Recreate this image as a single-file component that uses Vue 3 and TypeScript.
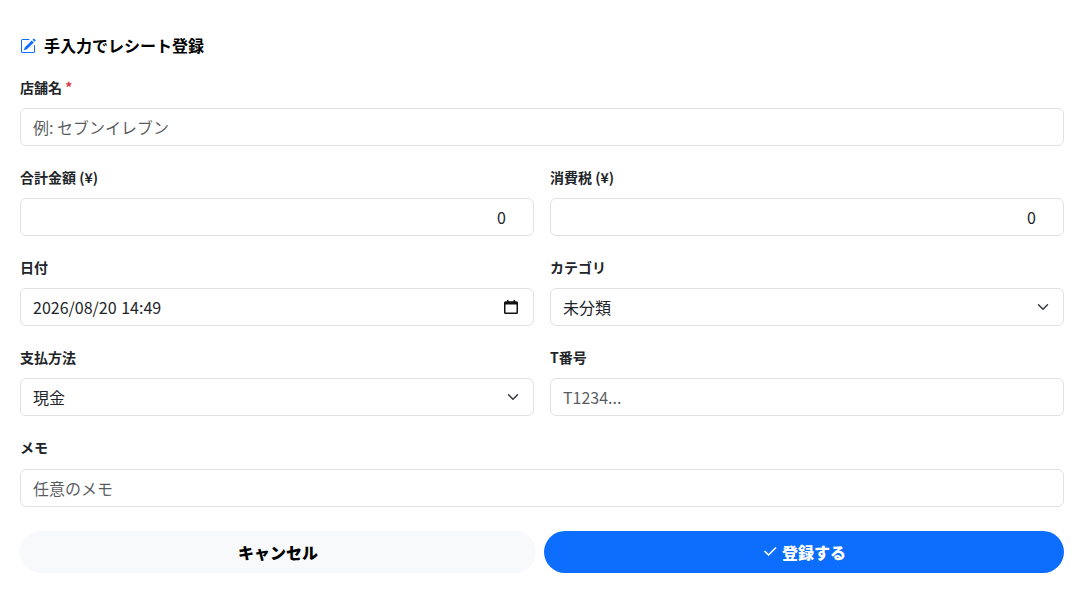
<script setup lang="ts">
const currency = 0;
</script>

<template>
  <form class="form" @submit.prevent>
    <h2 class="title">
      <svg class="edit" viewBox="0 0 16 16" fill="#0d6efd" aria-hidden="true">
        <path d="M15.502 1.94a.5.5 0 0 1 0 .706L14.459 3.69l-2-2L13.502.646a.5.5 0 0 1 .707 0l1.293 1.293zm-1.75 2.456-2-2L4.939 9.21a.5.5 0 0 0-.121.196l-.805 2.414a.25.25 0 0 0 .316.316l2.414-.805a.5.5 0 0 0 .196-.12l6.813-6.814z"/>
        <path fill-rule="evenodd" d="M1 13.5A1.5 1.5 0 0 0 2.5 15h11a1.5 1.5 0 0 0 1.5-1.5v-6a.5.5 0 0 0-1 0v6a.5.5 0 0 1-.5.5h-11a.5.5 0 0 1-.5-.5v-11a.5.5 0 0 1 .5-.5H9a.5.5 0 0 0 0-1H2.5A1.5 1.5 0 0 0 1 2.5z"/>
      </svg>
      <span>手入力でレシート登録</span>
    </h2>

    <div class="field">
      <label>店舗名 <span class="req">*</span></label>
      <input class="ctl" type="text" placeholder="例: セブンイレブン" />
    </div>

    <div class="row">
      <div class="field">
        <label>合計金額 (¥)</label>
        <input class="ctl num" type="text" :value="currency" />
      </div>
      <div class="field">
        <label>消費税 (¥)</label>
        <input class="ctl num" type="text" :value="currency" />
      </div>
    </div>

    <div class="row">
      <div class="field">
        <label>日付</label>
        <div class="ctl fake">
          <span class="date">2026/08/20 14:49</span>
          <svg class="cal" viewBox="0 0 14 14" aria-hidden="true">
            <path fill="#111" fill-rule="evenodd" d="M3 0h1.5v1.2h5V0H11v1.2h1.5A1.5 1.5 0 0 1 14 2.7v9.8a1.5 1.5 0 0 1-1.5 1.5h-11A1.5 1.5 0 0 1 0 12.5V2.7a1.5 1.5 0 0 1 1.5-1.5H3zM1.5 4.4v8.1h11V4.4z"/>
          </svg>
        </div>
      </div>
      <div class="field">
        <label>カテゴリ</label>
        <div class="ctl fake">
          <span>未分類</span>
          <svg class="chev" viewBox="0 0 16 16" aria-hidden="true">
            <path fill="none" stroke="#343a40" stroke-linecap="round" stroke-linejoin="round" stroke-width="2" d="m2 5 6 6 6-6"/>
          </svg>
        </div>
      </div>
    </div>

    <div class="row">
      <div class="field">
        <label>支払方法</label>
        <div class="ctl fake">
          <span>現金</span>
          <svg class="chev" viewBox="0 0 16 16" aria-hidden="true">
            <path fill="none" stroke="#343a40" stroke-linecap="round" stroke-linejoin="round" stroke-width="2" d="m2 5 6 6 6-6"/>
          </svg>
        </div>
      </div>
      <div class="field">
        <label>T番号</label>
        <input class="ctl" type="text" placeholder="T1234..." />
      </div>
    </div>

    <div class="field memo">
      <label>メモ</label>
      <input class="ctl" type="text" placeholder="任意のメモ" />
    </div>

    <div class="actions">
      <button type="button" class="btn cancel">キャンセル</button>
      <button type="submit" class="btn primary">
        <svg class="check" viewBox="0 0 16 16" fill="#fff" aria-hidden="true">
          <path d="M13.854 3.646a.5.5 0 0 1 0 .708l-7 7a.5.5 0 0 1-.708 0l-3.5-3.5a.5.5 0 1 1 .708-.708L6.5 10.293l6.646-6.647a.5.5 0 0 1 .708 0z" stroke="#fff" stroke-width=".9"/>
        </svg>
        <span>登録する</span>
      </button>
    </div>
  </form>
</template>

<style>
html, body { margin: 0; background: #fff; }
</style>

<style scoped>
.form {
  box-sizing: border-box;
  width: 1084px;
  height: 592px;
  padding: 35px 20px 0;
  font-family: "Noto Sans CJK JP", "Noto Sans", sans-serif;
  color: #212529;
  background: #fff;
}
.title {
  display: flex;
  align-items: center;
  gap: 8px;
  margin: 0 0 23px;
  height: 20px;
  font-size: 16px;
  line-height: 20px;
  font-weight: 700;
  color: #000;
}
.edit { width: 16px; height: 16px; margin-top: 1px; }
.field { min-width: 0; margin-bottom: 22px; }
.field label {
  display: block;
  height: 20px;
  margin-bottom: 10px;
  font-size: 14px;
  line-height: 18px;
  font-weight: 700;
}
.req { color: #dc3545; }
.row {
  display: grid;
  grid-template-columns: 1fr 1fr;
  column-gap: 16px;
}
.ctl {
  display: block;
  box-sizing: border-box;
  width: 100%;
  height: 38px;
  padding: 0 12px;
  border: 1px solid #dee2e6;
  border-radius: 6px;
  background: #fff;
  font: 400 16px/24px "Noto Sans CJK JP", "Noto Sans", sans-serif;
  color: #212529;
  outline: none;
}
.ctl::placeholder { color: rgba(33, 37, 41, 0.75); opacity: 1; }
.num { text-align: right; padding-right: 27px; }
.fake {
  display: flex;
  align-items: center;
  justify-content: space-between;
}
.date { word-spacing: 1px; }
.cal { width: 14px; height: 14px; margin-right: 3px; }
.chev { width: 12px; height: 12px; margin-right: 2px; }
.memo { margin-bottom: 24px; }
.memo label { margin-bottom: 11px; }
.actions {
  display: grid;
  grid-template-columns: 516px 520px;
  column-gap: 8px;
}
.btn {
  display: flex;
  align-items: center;
  justify-content: center;
  gap: 4px;
  height: 42px;
  padding: 0;
  border: 0;
  border-radius: 21px;
  font: 900 16px/24px "Noto Sans CJK JP", "Noto Sans", sans-serif;
}
.cancel { background: #f8f9fa; color: #000; }
.primary { background: #0d6efd; color: #fff; }
.check { width: 16px; height: 16px; }
</style>
